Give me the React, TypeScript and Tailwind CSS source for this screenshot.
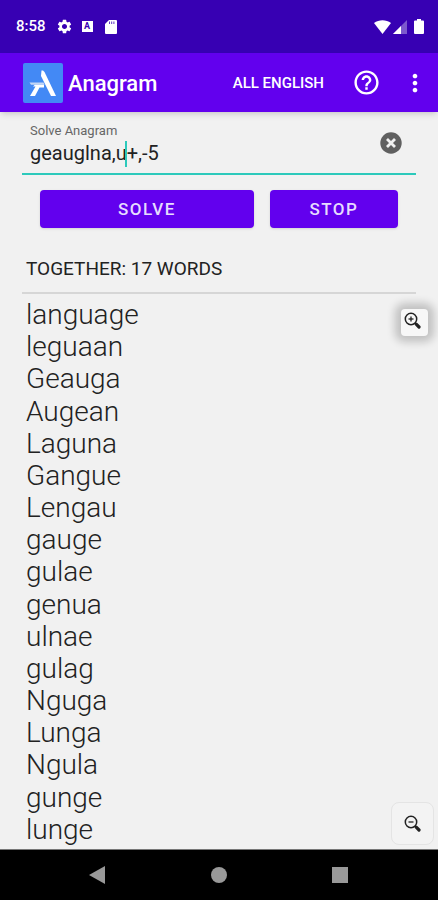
import { useState } from "react";
import { MdHelpOutline, MdMoreVert, MdSettings } from "react-icons/md";

const WORDS = [
  "language",
  "leguaan",
  "Geauga",
  "Augean",
  "Laguna",
  "Gangue",
  "Lengau",
  "gauge",
  "gulae",
  "genua",
  "ulnae",
  "gulag",
  "Nguga",
  "Lunga",
  "Ngula",
  "gunge",
  "lunge",
];

export default function App() {
  const [query, setQuery] = useState("geauglna,u+,-5");

  return (
    <div className="flex min-h-screen flex-col bg-[#f1f1f1] font-['Roboto',sans-serif] text-[#222]">
      <StatusBar />
      <AppBar />

      <main className="flex flex-1 flex-col">
        <form className="px-[22px]" onSubmit={(e) => e.preventDefault()}>
          <div className="flex h-[63px] items-center justify-between border-b-2 border-[#2cc9bb] pr-[14px] pl-2">
            <div className="relative flex-1 pt-1">
              <label htmlFor="query" className="block text-[13px] leading-4 text-[#666]">
                Solve Anagram
              </label>
              <input
                id="query"
                value={query}
                onChange={(e) => setQuery(e.target.value)}
                className="block w-full bg-transparent text-[20px] leading-7 text-[#222] outline-none"
              />
              {/* Caret */}
              <span className="absolute bottom-0 left-[95px] h-[26px] w-[2px] bg-[#2cc9bb]" />
            </div>
            <button type="button" aria-label="Clear" onClick={() => setQuery("")}>
              <svg viewBox="0 0 22 22" className="size-[22px]">
                <circle cx="11" cy="11" r="10.7" fill="#606060" />
                <path d="M7 7l8 8M15 7l-8 8" stroke="#f1f1f1" strokeWidth="2.8" />
              </svg>
            </button>
          </div>

          <div className="mt-[15px] flex gap-4 px-[18px]">
            <button className="h-[38px] flex-5 rounded bg-[#6200ee] pt-[2px] text-[17px] font-medium tracking-[1.5px] text-[#e6dcff] shadow-sm">
              SOLVE
            </button>
            <button
              type="button"
              className="h-[38px] flex-3 rounded bg-[#6200ee] pt-[2px] text-[17px] font-medium tracking-[1.5px] text-[#e6dcff] shadow-sm"
            >
              STOP
            </button>
          </div>
        </form>

        <h2 className="mx-[22px] mt-[27px] border-b-2 border-[#d6d6d6] px-1 pb-[9px] text-[19px] leading-7">
          TOGETHER: 17 WORDS
        </h2>

        <div className="relative flex flex-1 flex-col pt-[5px] pb-[3px]">
          <ul className="flex flex-1 flex-col pl-[26px]">
            {WORDS.map((word) => (
              <li key={word} className="flex-1 text-[28px] leading-8 font-light">
                {word}
              </li>
            ))}
          </ul>

          <button
            aria-label="Zoom in"
            className="absolute top-[15px] right-[10px] flex size-[27px] items-start rounded bg-[#f7f7f7] shadow-[0_0_8px_6px_rgba(0,0,0,0.2)]"
          >
            <Magnifier plus />
          </button>
          <button
            aria-label="Zoom out"
            className="absolute right-1 bottom-1 flex size-[43px] items-center justify-center rounded-lg border border-[#e4e4e4] bg-[#f3f3f3]"
          >
            <Magnifier />
          </button>
        </div>
      </main>

      <NavBar />
    </div>
  );
}

function StatusBar() {
  return (
    <div className="flex h-[53px] items-center justify-between bg-[#3700b3] pr-[14px] pl-4 text-white">
      <div className="flex items-center">
        <span className="text-[15px] font-medium">8:58</span>
        <MdSettings className="ml-[10px] size-[17px]" />
        <span className="ml-[9px] flex size-[11px] items-center justify-center bg-white text-[9px] leading-none font-bold text-[#3700b3]">
          A
        </span>
        <svg viewBox="0 0 12 14" className="ml-3 h-[14px] w-3" fill="currentColor">
          <path d="M4 0h7a1 1 0 0 1 1 1v12a1 1 0 0 1-1 1H1a1 1 0 0 1-1-1V4z" />
          <path d="M4.500 1.500v2.500M6.700 1.500v2.500M8.900 1.500v2.500" stroke="#3700b3" strokeWidth="0.800" />
        </svg>
      </div>
      <div className="flex items-center">
        <svg viewBox="0 0 17 14" className="h-[14px] w-[17px]" fill="currentColor">
          <path d="M0 3C5-.7 12-.7 17 3L8.500 14z" />
        </svg>
        <svg viewBox="0 0 14 14" className="ml-[2px] size-[14px]" fill="currentColor">
          <path d="M0 14L14 0v14z" opacity="0.350" />
          <path d="M0 14L8 6v8z" />
        </svg>
        <svg viewBox="0 0 10 15" className="ml-[7px] h-[15px] w-[10px]" fill="currentColor">
          <path d="M3 0h4v1.500h2a1 1 0 0 1 1 1V14a1 1 0 0 1-1 1H1a1 1 0 0 1-1-1V2.500a1 1 0 0 1 1-1h2z" />
        </svg>
      </div>
    </div>
  );
}

function AppBar() {
  return (
    <header className="flex h-[59px] items-center bg-[#6200ee] pr-[9px] pl-[23px] text-white shadow-md">
      <Logo />
      <h1 className="ml-[5px] flex-1 pt-[2px] text-[22px] font-medium">Anagram</h1>
      <button className="pt-[2px] text-[15px] font-medium">ALL ENGLISH</button>
      <button aria-label="Help" className="ml-7">
        <MdHelpOutline className="size-[29px]" />
      </button>
      <button aria-label="More options" className="ml-5">
        <MdMoreVert className="size-7" />
      </button>
    </header>
  );
}

function Logo() {
  return (
    <svg viewBox="0 0 40 40" className="size-10">
      <rect width="40" height="40" rx="2" fill="#4389f5" />
      <path d="M18.500 7.500h1.500l1.500 1.500L33 33h-5L18 13z" fill="#fff" />
      <path d="M21 21.500v3h-4.500L12 33H7l5.500-9.500H10L12 21.500z" fill="#fff" />
      <path d="M6.500 19.500h14l1 2.200H8z" fill="#c3d6f5" />
    </svg>
  );
}

function Magnifier({ plus = false }: { plus?: boolean }) {
  return (
    <svg viewBox="0 0 17 17" className="m-[3px] size-[17px]" fill="none" stroke="#222">
      <circle cx="7" cy="7" r="5.700" strokeWidth="1.500" />
      <path d="M4.500 7h5" strokeWidth="1.300" />
      {plus && <path d="M7 4.500v5" strokeWidth="1.300" />}
      <path d="M11 11l1.500 1.500" strokeWidth="1.500" />
      <path d="M12.200 12.200l2.800 2.800" strokeWidth="3.200" strokeLinecap="round" />
    </svg>
  );
}

function NavBar() {
  return (
    <nav className="flex h-[51px] items-center justify-between border-t border-[#777] bg-black pr-[90px] pl-[88px] text-[#999]">
      <button aria-label="Back">
        <svg viewBox="0 0 18 18" className="size-[18px]" fill="currentColor">
          <path d="M1 9L17 0v18z" />
        </svg>
      </button>
      <button aria-label="Home" className="size-4 rounded-full bg-[#999]" />
      <button aria-label="Recent apps" className="size-4 bg-[#999]" />
    </nav>
  );
}
